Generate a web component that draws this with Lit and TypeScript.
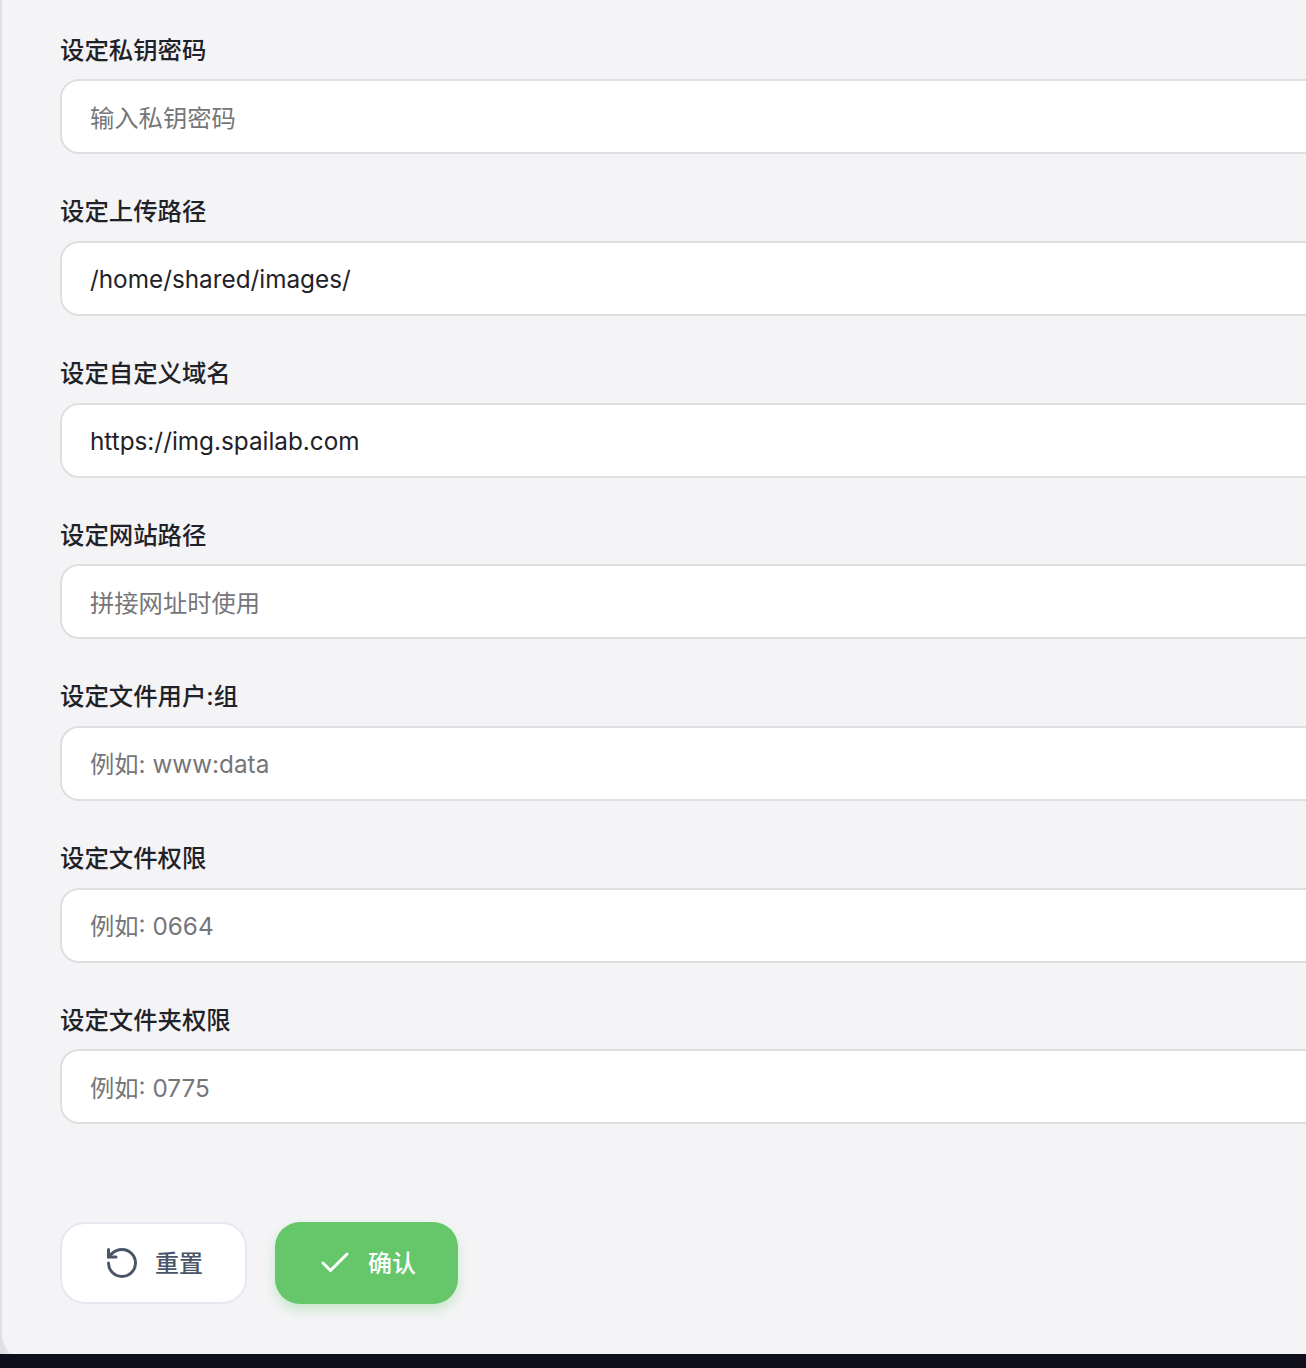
import { LitElement, html, css } from 'lit';
import { customElement } from 'lit/decorators.js';

const fields = [
  { label: '设定私钥密码', placeholder: '输入私钥密码', value: '' },
  { label: '设定上传路径', placeholder: '', value: '/home/shared/images/' },
  { label: '设定自定义域名', placeholder: '', value: 'https://img.spailab.com' },
  { label: '设定网站路径', placeholder: '拼接网址时使用', value: '' },
  { label: '设定文件用户:组', placeholder: '例如: www:data', value: '' },
  { label: '设定文件权限', placeholder: '例如: 0664', value: '' },
  { label: '设定文件夹权限', placeholder: '例如: 0775', value: '' },
];

@customElement('app-root')
export class AppRoot extends LitElement {
  static styles = css`
    :host {
      display: flex;
      flex-direction: column;
      height: 1368px;
      overflow: hidden;
      background: #0d0f1a;
      font-family: Inter, "Noto Sans CJK SC", sans-serif;
    }

    .shell {
      height: 1354px;
      flex: none;
      overflow: hidden;
      padding-left: 2px;
      background: linear-gradient(90deg, #e0e0e2 0, #e2e2e4 4px, #f1f1f3 14px);
    }

    .panel {
      box-sizing: border-box;
      width: 1500px;
      height: 1360px;
      padding: 33.5px 0 56px 58px;
      background: #f4f4f6;
      border-bottom-left-radius: 26px;
      display: flex;
      flex-direction: column;
    }

    .field {
      display: flex;
      flex-direction: column;
      gap: 13.7px;
      height: 161.7px;
      flex: none;
    }

    label {
      font-size: 24.4px;
      line-height: 32px;
      font-weight: 500;
      color: #1f2228;
    }

    input {
      box-sizing: border-box;
      width: 100%;
      height: 75px;
      padding: 2px 28px 0;
      border: 2px solid #dfdfe1;
      border-radius: 19px;
      background: #fff;
      outline: none;
      font: inherit;
      font-size: 24.3px;
      color: #1f2228;
    }

    input::placeholder {
      color: #76767a;
      opacity: 1;
    }

    .actions {
      display: flex;
      gap: 28px;
      margin-top: auto;
    }

    button {
      box-sizing: border-box;
      display: flex;
      align-items: center;
      gap: 15px;
      height: 82px;
      border-radius: 25px;
      font: inherit;
      font-size: 24px;
      font-weight: 500;
    }

    button span {
      margin-bottom: 4px;
    }

    button svg {
      width: 36px;
      height: 36px;
      fill: none;
      stroke: currentColor;
      stroke-width: 2;
      stroke-linecap: round;
      stroke-linejoin: round;
    }

    .reset {
      padding: 0 42px;
      border: 2px solid #e5e8ef;
      background: #fff;
      color: #4a5568;
    }

    .confirm {
      padding: 0 42px;
      border: none;
      background: #66c66a;
      color: #fff;
      box-shadow: 0 6px 12px rgba(102, 198, 106, 0.3);
    }
  `;

  render() {
    return html`
      <div class="shell">
        <main class="panel">
          ${fields.map(
            (f) => html`
              <div class="field">
                <label>${f.label}</label>
                <input type="text" .value=${f.value} placeholder=${f.placeholder} />
              </div>
            `
          )}
          <div class="actions">
            <button class="reset">
              <svg viewBox="0 0 24 24">
                <path d="M3 12a9 9 0 1 0 9-9 9.75 9.75 0 0 0-6.74 2.74L3 8" />
                <path d="M3 3v5h5" />
              </svg>
              <span>重置</span>
            </button>
            <button class="confirm">
              <svg viewBox="0 0 24 24"><path d="M20 6 9 17l-5-5" /></svg>
              <span>确认</span>
            </button>
          </div>
        </main>
      </div>
    `;
  }
}
